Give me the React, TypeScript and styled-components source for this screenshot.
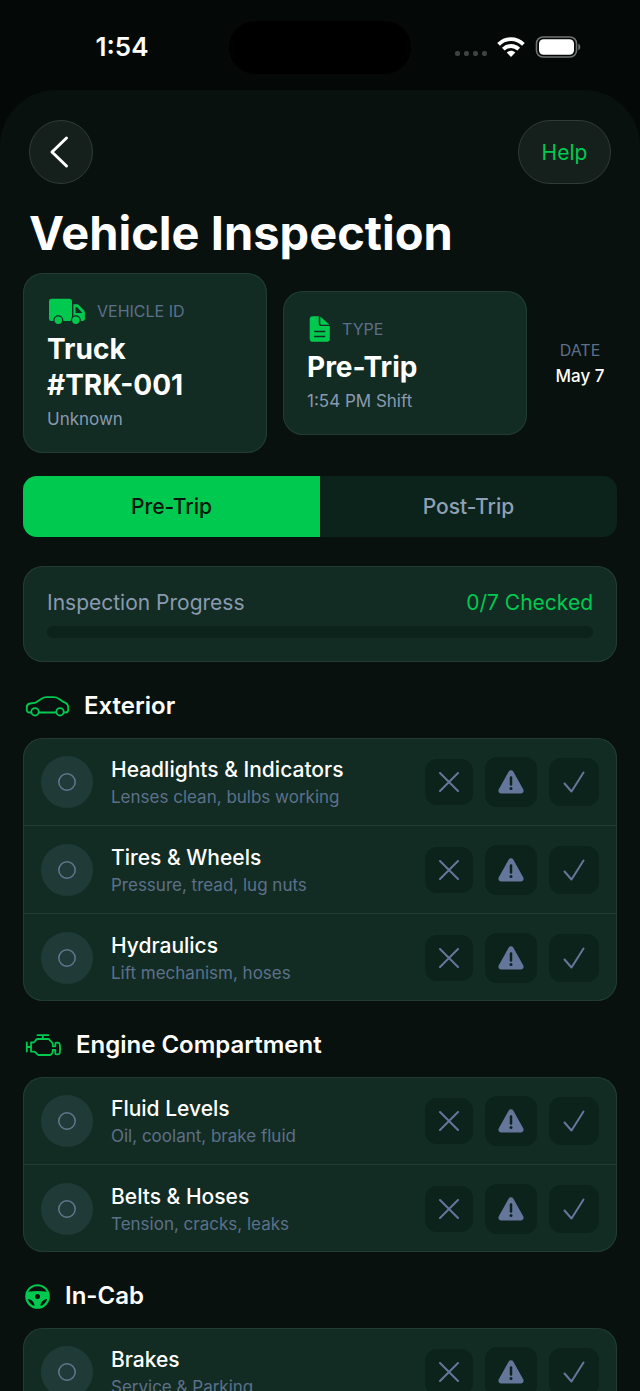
import React, { useState } from "react";
import styled, { createGlobalStyle } from "styled-components";

const GlobalStyle = createGlobalStyle`
  *, *::before, *::after { box-sizing: border-box; }
  body {
    margin: 0;
    background: #040807;
    color: #ffffff;
    font-family: Inter, "Liberation Sans", sans-serif;
  }
  button { font: inherit; color: inherit; border: 0; padding: 0; cursor: pointer; }
  h1, h2, h3, p { margin: 0; }
  svg { display: block; flex: none; }
`;

const color = {
  green: "#00c950",
  sheet: "#08110e",
  card: "#122c23",
  cardBorder: "#223c33",
  well: "#0b231b",
  muted: "#8a9ab0",
  dim: "#5d708a",
};

const Screen = styled.div`
  display: flex;
  flex-direction: column;
  height: 100vh;
  overflow: hidden;
`;

const StatusBar = styled.div`
  flex: none;
  display: grid;
  grid-template-columns: 1fr 182px 1fr;
  align-items: center;
  justify-items: center;
  height: 90px;
  padding: 4px 15px 0;
`;

const Time = styled.span`
  font-size: 26px;
  line-height: 32px;
  font-weight: 600;
`;

const Island = styled.div`
  width: 100%;
  height: 53px;
  border-radius: 27px;
  background: #000000;
`;

const StatusIcons = styled.div`
  display: flex;
  align-items: center;
  gap: 10px;
`;

const Sheet = styled.div`
  flex: 1;
  min-height: 0;
  overflow-y: auto;
  scrollbar-width: none;
  padding: 30px 23px 24px;
  border-radius: 56px 56px 0 0;
  background: ${color.sheet};
`;

const NavBar = styled.header`
  display: flex;
  justify-content: space-between;
  padding: 0 6px;
`;

const GlassButton = styled.button<{ $wide?: boolean }>`
  display: flex;
  align-items: center;
  justify-content: center;
  width: ${(p) => (p.$wide ? 93 : 64)}px;
  height: 64px;
  border: 1px solid #2f3b37;
  border-radius: 32px;
  background: #15201d;
  color: ${(p) => (p.$wide ? color.green : "#ffffff")};
  font-size: 21px;
`;

const Title = styled.h1`
  padding: 20px 6px 11px;
  font-size: 47px;
  line-height: 58px;
  font-weight: 700;
`;

const Summary = styled.section`
  display: flex;
  align-items: center;
  gap: 16px;
`;

const Card = styled.div`
  border-radius: 20px;
  background: ${color.card};
  box-shadow: inset 0 0 0 1px ${color.cardBorder};
`;

const InfoCard = styled(Card)`
  flex: 1;
  min-width: 0;
  display: flex;
  flex-direction: column;
  gap: 6px;
  padding: 24px;
`;

const InfoHead = styled.div`
  display: flex;
  align-items: center;
  gap: 12px;
  height: 28px;
`;

const Label = styled.span`
  color: ${color.dim};
  font-size: 16px;
  line-height: 24px;
`;

const InfoValue = styled.h2`
  font-size: 28px;
  line-height: 36px;
  font-weight: 700;
`;

const Unbroken = styled.span`
  white-space: nowrap;
`;

const InfoNote = styled.p`
  color: ${color.muted};
  font-size: 17px;
  line-height: 20px;
`;

const DateBlock = styled.div`
  flex: none;
  display: flex;
  flex-direction: column;
  align-items: center;
  gap: 2px;
  width: 74px;
`;

const DateValue = styled.span`
  font-size: 17px;
  line-height: 24px;
  font-weight: 500;
  white-space: nowrap;
`;

const Segments = styled.div`
  display: grid;
  grid-template-columns: 1fr 1fr;
  height: 61px;
  margin: 23px 0 29px;
  border-radius: 14px;
  overflow: hidden;
  background: ${color.well};
`;

const Segment = styled.button<{ $active: boolean }>`
  background: ${(p) => (p.$active ? color.green : "transparent")};
  color: ${(p) => (p.$active ? "#05140c" : "#8fa0b5")};
  font-size: 21px;
  font-weight: 500;
`;

const ProgressCard = styled(Card)`
  display: flex;
  flex-direction: column;
  gap: 10px;
  padding: 24px;
`;

const ProgressHead = styled.div`
  display: flex;
  justify-content: space-between;
  color: ${color.muted};
  font-size: 21px;
  line-height: 26px;
`;

const ProgressCount = styled.span`
  color: ${color.green};
`;

const Track = styled.div`
  height: 12px;
  border-radius: 6px;
  overflow: hidden;
  background: ${color.well};
`;

const Fill = styled.div`
  height: 100%;
  background: ${color.green};
`;

const SectionHead = styled.div`
  display: flex;
  align-items: center;
  gap: 15px;
  padding: 28px 2px 16px;
  color: ${color.green};
`;

const SectionTitle = styled.h2`
  color: #ffffff;
  font-size: 24px;
  line-height: 32px;
  font-weight: 600;
`;

const Row = styled.div`
  display: flex;
  align-items: center;
  gap: 18px;
  height: 87px;
  padding: 0 18px;

  & + & {
    height: 88px;
    border-top: 1px solid ${color.cardBorder};
  }
`;

const Marker = styled.div`
  flex: none;
  display: flex;
  align-items: center;
  justify-content: center;
  width: 52px;
  height: 52px;
  border-radius: 50%;
  background: #203a38;
`;

const RowText = styled.div`
  flex: 1;
  min-width: 0;
`;

const RowTitle = styled.h3`
  font-size: 21px;
  line-height: 30px;
  font-weight: 500;
  white-space: nowrap;
`;

const RowNote = styled.p`
  color: ${color.dim};
  font-size: 17px;
  line-height: 24px;
  white-space: nowrap;
`;

const Actions = styled.div`
  display: flex;
  align-items: center;
  gap: 12px;
`;

const Action = styled.button<{ $w: number; $h: number }>`
  display: flex;
  align-items: center;
  justify-content: center;
  width: ${(p) => p.$w}px;
  height: ${(p) => p.$h}px;
  border-radius: 12px;
  background: ${color.well};
  color: #64779a;
`;

const SignalDots = () => (
  <svg width="32" height="20" viewBox="0 0 32 20" fill="#3f4442" aria-hidden="true">
    {[0, 9, 18, 27].map((x) => (
      <rect key={x} x={x} y="14" width="5" height="5" rx="2" />
    ))}
  </svg>
);

const Wifi = () => (
  <svg width="28" height="20" viewBox="0 0 28 20" fill="none" stroke="#ffffff" strokeWidth="3.8" aria-hidden="true">
    <path d="M1.6 7.4C8.5.4 19.5.4 26.4 7.4" />
    <path d="M6.3 12.2c4.4-4.300 11-4.300 15.400 0" />
    <path d="M14 20l-4.300-4.500c2.500-2.200 6.100-2.200 8.600 0z" fill="#ffffff" stroke="none" />
  </svg>
);

const Battery = () => (
  <svg width="46" height="22" viewBox="0 0 46 22" fill="none" aria-hidden="true">
    <rect x="1.500" y="1" width="40" height="20" rx="6.500" stroke="#6f7371" strokeWidth="1.600" />
    <rect x="4" y="3.300" width="35" height="15.400" rx="4.500" fill="#ffffff" />
    <path d="M43.300 7.800c2.600 1 2.600 5.400 0 6.400z" fill="#6f7371" />
  </svg>
);

const ChevronLeft = () => (
  <svg width="24" height="34" viewBox="0 0 24 34" fill="none" stroke="currentColor" strokeWidth="3" strokeLinecap="round" strokeLinejoin="round" aria-hidden="true">
    <path d="M17.500 3L3 17l14.500 14" />
  </svg>
);

const Truck = () => (
  <svg width="38" height="28" viewBox="0 0 38 28" fill={color.green} aria-hidden="true">
    <path d="M4.700 1.700h17.600A2.700 2.700 0 0 1 25 4.400V24H4.500A2.500 2.500 0 0 1 2 21.500V4.400a2.700 2.700 0 0 1 2.700-2.700z" />
    <path
      fillRule="evenodd"
      d="M26.400 7.300h3.400c1 0 1.800.4 2.500 1.100l4.600 4.900c.7.700 1 1.500 1 2.400v6A2.300 2.300 0 0 1 35.600 24h-9.200zm2.200 2.600v6h6.800l-5-5.400a1.800 1.800 0 0 0-1.300-.6z"
    />
    <circle cx="11.300" cy="23.300" r="4.400" stroke={color.card} strokeWidth="1.400" />
    <circle cx="28.800" cy="23.300" r="4.400" stroke={color.card} strokeWidth="1.400" />
  </svg>
);

const Document = () => (
  <svg width="23" height="28" viewBox="0 0 23 28" fill={color.green} aria-hidden="true">
    <path
      fillRule="evenodd"
      d="M5.500 1.200h6.200v7.300a2.600 2.600 0 0 0 2.600 2.600h8.500v12.200a3.300 3.300 0 0 1-3.300 3.500H6a3.300 3.300 0 0 1-3.300-3.500V4.500a3.100 3.100 0 0 1 2.800-3.300zM7.200 15.700v1.600h11v-1.600zm0 5v1.600h11v-1.600z"
    />
    <path d="M13.300 1.400l9.200 8.400h-7.700a1.500 1.500 0 0 1-1.500-1.500z" />
  </svg>
);

const Car = () => (
  <svg width="44" height="22" viewBox="0 0 44 22" fill="none" stroke="currentColor" strokeWidth="1.800" strokeLinejoin="round" aria-hidden="true">
    <path d="M6.300 17.500H4.500c-1.700 0-2.700-1-2.700-2.700v-2.600c0-2.100 1.200-3.400 3.300-3.700l4.500-.7c.8-.1 1.400-.4 2-.8l5-3.300c1.600-1.100 3-1.500 4.800-1.500h7.400c2 0 3.400.4 5 1.500l5.100 3.500c2.700.8 4.300 2.600 4.300 5.200v2.400c0 1.700-1 2.700-2.700 2.700h-1.800M13.800 17.500h17.400" />
    <circle cx="10" cy="16.800" r="3.700" />
    <circle cx="35" cy="16.800" r="3.700" />
  </svg>
);

const Engine = () => (
  <svg width="36" height="24" viewBox="0 0 36 24" fill="none" stroke="currentColor" strokeWidth="1.800" strokeLinecap="round" strokeLinejoin="round" aria-hidden="true">
    <path d="M12.500 2.200h10.800M17.800 2.200V6M1.800 9.500v9M1.800 14H6" />
    <path d="M6 9.500h2.200c.7 0 1.100-.3 1.500-.8L11 6.900c.4-.6.900-.9 1.600-.9h10.300c.7 0 1.200.3 1.600.8l2.600 2.700c.4.500.6.900.6 1.500v2.300h2.600v-2.100c0-1 .5-1.500 1.500-1.500h1.100c1 0 1.600.5 1.800 1.400.5 3 .5 6 0 8.900-.2.900-.8 1.400-1.800 1.400h-1.100c-1 0-1.500-.5-1.500-1.500V17h-2.600v1.900c0 .6-.2 1-.6 1.500l-1 1c-.4.400-.9.600-1.500.6H13.900c-.6 0-1.100-.2-1.500-.6l-1.900-2.100c-.4-.4-.8-.6-1.400-.6H6z" />
  </svg>
);

const SteeringWheel = () => (
  <svg width="25" height="25" viewBox="0 0 25 25" fill="currentColor" aria-hidden="true">
    <path
      fillRule="evenodd"
      d="M12.500.2a12.300 12.300 0 1 1 0 24.600 12.300 12.300 0 0 1 0-24.600zM3.300 7.700c3-.6 6.100-.8 9.200-.8s6.200.2 9.200.8C19.800 4.300 16.500 2.300 12.500 2.300S5.200 4.300 3.300 7.700zM12.500 10.100a2.500 2.500 0 1 0 0 5 2.500 2.500 0 0 0 0-5zM2.800 15c.9 3.400 3.300 5.900 6.700 7-.1-3.900-2.700-6.700-6.700-7zM22.200 15c-4 .3-6.600 3.100-6.700 7 3.400-1.100 5.800-3.600 6.700-7z"
    />
  </svg>
);

const Ring = () => (
  <svg width="20" height="20" viewBox="0 0 20 20" fill="none" stroke="#62778e" strokeWidth="1.500" aria-hidden="true">
    <circle cx="10" cy="10" r="8.200" />
  </svg>
);

const Cross = () => (
  <svg width="20" height="20" viewBox="0 0 20 20" fill="none" stroke="currentColor" strokeWidth="2" strokeLinecap="round" aria-hidden="true">
    <path d="M1 1l18 18M19 1L1 19" />
  </svg>
);

const Warning = () => (
  <svg width="26" height="24" viewBox="0 0 26 24" aria-hidden="true">
    <path fill="currentColor" d="M10.600 1.700a2.800 2.800 0 0 1 4.800 0l9.800 17.600c1.100 2-.2 4.200-2.400 4.200H3.200C1 23.500-.3 21.300.8 19.300z" />
    <path d="M13 7.600v7" stroke={color.well} strokeWidth="2.500" strokeLinecap="round" />
    <circle cx="13" cy="18.600" r="1.500" fill={color.well} />
  </svg>
);

const Check = () => (
  <svg width="22" height="22" viewBox="0 0 22 22" fill="none" stroke="currentColor" strokeWidth="2" strokeLinecap="round" strokeLinejoin="round" aria-hidden="true">
    <path d="M1.500 12.500l7 8L20.500 1.500" />
  </svg>
);

type Item = { name: string; note: string };
type Group = { title: string; icon: React.ReactNode; items: Item[] };

const groups: Group[] = [
  {
    title: "Exterior",
    icon: <Car />,
    items: [
      { name: "Headlights & Indicators", note: "Lenses clean, bulbs working" },
      { name: "Tires & Wheels", note: "Pressure, tread, lug nuts" },
      { name: "Hydraulics", note: "Lift mechanism, hoses" },
    ],
  },
  {
    title: "Engine Compartment",
    icon: <Engine />,
    items: [
      { name: "Fluid Levels", note: "Oil, coolant, brake fluid" },
      { name: "Belts & Hoses", note: "Tension, cracks, leaks" },
    ],
  },
  {
    title: "In-Cab",
    icon: <SteeringWheel />,
    items: [{ name: "Brakes", note: "Service & Parking" }],
  },
];

const ChecklistRow = ({ item }: { item: Item }) => (
  <Row>
    <Marker>
      <Ring />
    </Marker>
    <RowText>
      <RowTitle>{item.name}</RowTitle>
      <RowNote>{item.note}</RowNote>
    </RowText>
    <Actions>
      <Action type="button" $w={48} $h={46} aria-label={`Fail ${item.name}`}>
        <Cross />
      </Action>
      <Action type="button" $w={52} $h={50} aria-label={`Flag ${item.name}`}>
        <Warning />
      </Action>
      <Action type="button" $w={50} $h={48} aria-label={`Pass ${item.name}`}>
        <Check />
      </Action>
    </Actions>
  </Row>
);

export default function App() {
  const [trip, setTrip] = useState("Pre-Trip");
  const checked = 0;
  const total = 7;

  return (
    <>
      <GlobalStyle />
      <Screen>
        <StatusBar>
          <Time>1:54</Time>
          <Island />
          <StatusIcons>
            <SignalDots />
            <Wifi />
            <Battery />
          </StatusIcons>
        </StatusBar>
        <Sheet>
          <NavBar>
            <GlassButton type="button" aria-label="Back">
              <ChevronLeft />
            </GlassButton>
            <GlassButton type="button" $wide>
              Help
            </GlassButton>
          </NavBar>
          <main>
            <Title>Vehicle Inspection</Title>
            <Summary>
              <InfoCard>
                <InfoHead>
                  <Truck />
                  <Label>VEHICLE ID</Label>
                </InfoHead>
                <InfoValue>
                  Truck <Unbroken>#TRK-001</Unbroken>
                </InfoValue>
                <InfoNote>Unknown</InfoNote>
              </InfoCard>
              <InfoCard>
                <InfoHead>
                  <Document />
                  <Label>TYPE</Label>
                </InfoHead>
                <InfoValue>Pre-Trip</InfoValue>
                <InfoNote>1:54 PM Shift</InfoNote>
              </InfoCard>
              <DateBlock>
                <Label>DATE</Label>
                <DateValue>May 7</DateValue>
              </DateBlock>
            </Summary>
            <Segments>
              {["Pre-Trip", "Post-Trip"].map((name) => (
                <Segment key={name} type="button" $active={trip === name} aria-pressed={trip === name} onClick={() => setTrip(name)}>
                  {name}
                </Segment>
              ))}
            </Segments>
            <ProgressCard>
              <ProgressHead>
                <span>Inspection Progress</span>
                <ProgressCount>
                  {checked}/{total} Checked
                </ProgressCount>
              </ProgressHead>
              <Track role="progressbar" aria-label="Inspection Progress" aria-valuenow={checked} aria-valuemin={0} aria-valuemax={total}>
                <Fill style={{ width: `${(checked / total) * 100}%` }} />
              </Track>
            </ProgressCard>
            {groups.map((group) => (
              <section key={group.title}>
                <SectionHead>
                  {group.icon}
                  <SectionTitle>{group.title}</SectionTitle>
                </SectionHead>
                <Card>
                  {group.items.map((item) => (
                    <ChecklistRow key={item.name} item={item} />
                  ))}
                </Card>
              </section>
            ))}
          </main>
        </Sheet>
      </Screen>
    </>
  );
}
